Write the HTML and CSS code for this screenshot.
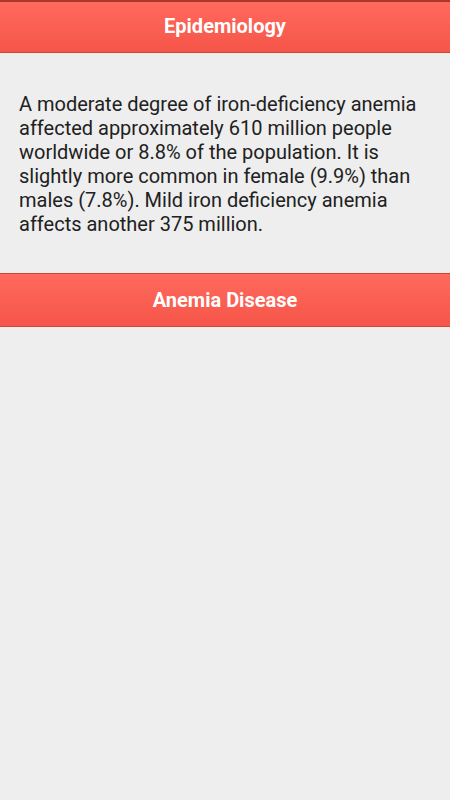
FILE: index.html
```html
<!DOCTYPE html>
<html lang="en">
<head>
  <meta charset="UTF-8" />
  <title>Epidemiology</title>
  <meta name="viewport" content="width=device-width, initial-scale=1.0" />
  <link rel="stylesheet" href="styles.css">
</head>
<body>

<header class="bar bar-top">Epidemiology</header>

<main class="content">
  <p>A moderate degree of iron-deficiency anemia affected approximately 610 million people worldwide or 8.8% of the population. It is slightly more common in female (9.9%) than males (7.8%). Mild iron deficiency anemia affects another 375 million.</p>
</main>

<div class="bar bar-link">Anemia Disease</div>

</body>
</html>
```

FILE: styles.css
```css
body {
  font-family: Roboto, "Noto Sans", sans-serif;
  background: #eeeeee;
  margin: 0;
  padding: 0;
}

/* Красные полосы */
.bar {
  text-align: center;
  color: white;
  font-weight: bold;
  font-size: 20px;
  background: linear-gradient(#ff6a5d, #f65549);
  border-bottom: 1px solid #d0463a;
}

.bar-top {
  border-top: 2px solid #a8382e;
  height: 50px;
  line-height: 48px;
}

.bar-link {
  border-top: 1px solid #c8443a;
  height: 52px;
  line-height: 52px;
}

/* Текст */
.content {
  padding: 39px 19px 37px;
}

.content p {
  margin: 0;
  font-size: 20px;
  line-height: 24px;
  color: #212121;
}
```
